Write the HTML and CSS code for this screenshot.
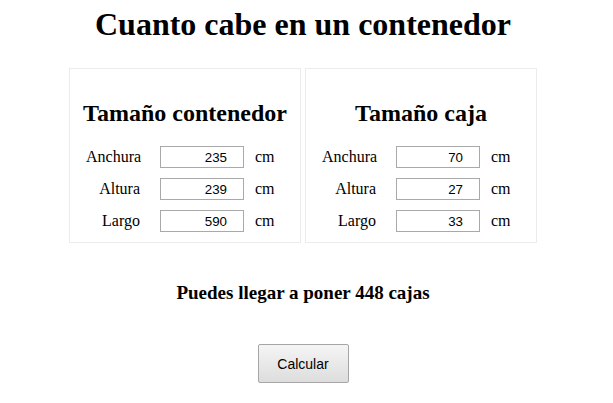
FILE: index.html
```html
<!DOCTYPE html>
<html lang="es">
<head>
<meta charset="utf-8">
<title>Cuanto cabe en un contenedor</title>
<link rel="stylesheet" href="styles.css">
</head>
<body>
<div class="page">
  <h1 class="title">Cuanto cabe en un contenedor</h1>
  <div class="panels">
    <section class="panel">
      <h2 class="panel-title">Tamaño contenedor</h2>
      <div class="fields">
        <label class="lbl">Anchura</label><input class="num" type="text" value="235"><span class="unit">cm</span>
        <label class="lbl">Altura</label><input class="num" type="text" value="239"><span class="unit">cm</span>
        <label class="lbl">Largo</label><input class="num" type="text" value="590"><span class="unit">cm</span>
      </div>
    </section>
    <section class="panel">
      <h2 class="panel-title">Tamaño caja</h2>
      <div class="fields">
        <label class="lbl">Anchura</label><input class="num" type="text" value="70"><span class="unit">cm</span>
        <label class="lbl">Altura</label><input class="num" type="text" value="27"><span class="unit">cm</span>
        <label class="lbl">Largo</label><input class="num" type="text" value="33"><span class="unit">cm</span>
      </div>
    </section>
  </div>
  <p class="result">Puedes llegar a poner 448 cajas</p>
  <div class="actions"><button class="btn" type="button">Calcular</button></div>
</div>
</body>
</html>
```
FILE: styles.css
```css
* { box-sizing: border-box; }
html, body { margin: 0; padding: 0; background: #fff; }
body {
  font-family: "Liberation Serif", "Times New Roman", serif;
  color: #000;
}
.page {
  width: 590px;
  margin: 0 0 0 8px;
  padding-top: 6px;
  display: flex;
  flex-direction: column;
  align-items: center;
}
.title {
  margin: 0;
  font-size: 32px;
  line-height: 36px;
  font-weight: bold;
  text-align: center;
}
.panels {
  margin-top: 26px;
  display: flex;
  gap: 4px;
}
.panel {
  width: 232px;
  height: 175px;
  border: 1px solid #ececec;
  padding: 30px 0 0 16px;
  display: flex;
  flex-direction: column;
}
.panel-title {
  margin: 0 0 0 -16px;
  font-size: 24px;
  line-height: 28px;
  font-weight: bold;
  text-align: center;
}
.fields {
  margin-top: 19px;
  display: grid;
  grid-template-columns: 54px 84px auto;
  justify-content: start;
  column-gap: 20px;
  row-gap: 10px;
  align-items: baseline;
}
.fields .unit { margin-left: -9px; }
.lbl {
  font-size: 16px;
  text-align: right;
  white-space: nowrap;
}
.unit { font-size: 16px; }
.num {
  width: 84px;
  height: 22px;
  margin: 0;
  border: 1px solid #a9a9a9;
  border-radius: 0;
  padding: 0 16px 0 2px;
  font-family: "Liberation Sans", Arial, sans-serif;
  font-size: 13.333px;
  text-align: right;
  color: #000;
  background: #fff;
}
.result {
  margin: 39px 0 0;
  font-size: 19px;
  line-height: 22px;
  font-weight: bold;
}
.actions { margin-top: 40px; }
.btn {
  width: 91px;
  height: 39px;
  border: 1px solid #a6a6a6;
  border-radius: 2px;
  background: linear-gradient(#f5f5f5, #dddddd);
  font-family: "Liberation Sans", Arial, sans-serif;
  font-size: 14px;
  color: #000;
  padding: 0;
}
```
